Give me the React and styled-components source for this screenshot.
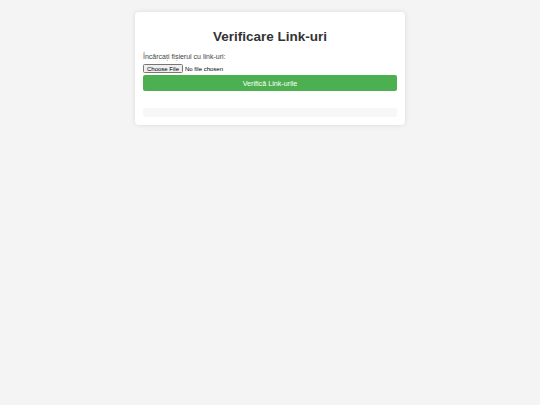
import React from "react";
import styled, { createGlobalStyle } from "styled-components";

const Global = createGlobalStyle`
  html, body {
    margin: 0;
    padding: 0;
    background: #f4f4f4;
    font-family: "Liberation Sans", Arial, sans-serif;
    -webkit-font-smoothing: antialiased;
  }
`;

const Page = styled.div`
  min-height: 405px;
  padding-top: 12px;
  box-sizing: border-box;
`;

const Card = styled.div`
  width: 270px;
  margin: 0 auto;
  box-sizing: border-box;
  padding: 8px 8px 8px 8px;
  background: #ffffff;
  border-radius: 4px;
  box-shadow: 0 0 5px rgba(0, 0, 0, 0.1);
`;

const Title = styled.h1`
  margin: 9px 0 7px 0;
  font-size: 13.5px;
  line-height: 16px;
  font-weight: bold;
  text-align: center;
  color: #333333;
`;

const Label = styled.label`
  display: block;
  font-size: 7px;
  line-height: 9px;
  color: #444444;
  margin-bottom: 3px;
`;

const FileInput = styled.input`
  display: block;
  zoom: 0.5;
  font-size: 12px;
  font-family: "Liberation Sans", Arial, sans-serif;
  margin: 0 0 4px 0;
  color: #000;
`;

const SubmitButton = styled.button`
  display: block;
  width: 100%;
  height: 16px;
  padding: 0;
  border: none;
  border-radius: 2px;
  background: #4caf50;
  color: #ffffff;
  font-family: "Liberation Sans", Arial, sans-serif;
  font-size: 7.2px;
  font-weight: normal;
  cursor: pointer;
`;

const Results = styled.div`
  margin-top: 17px;
  height: 9px;
  background: #f7f7f7;
  border-radius: 2px;
`;

export default function App() {
  return (
    <>
      <Global />
      <Page>
        <Card>
          <Title>Verificare Link-uri</Title>
          <Label htmlFor="file">Încărcați fișierul cu link-uri:</Label>
          <FileInput type="file" id="file" />
          <SubmitButton type="button">Verifică Link-urile</SubmitButton>
          <Results />
        </Card>
      </Page>
    </>
  );
}
